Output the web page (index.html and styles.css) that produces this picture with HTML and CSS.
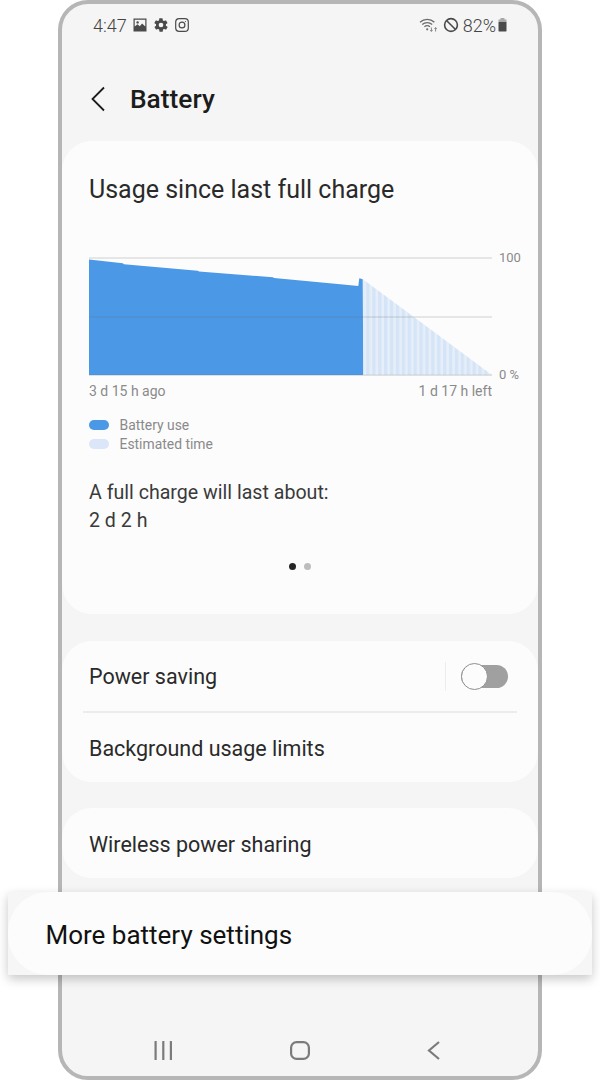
FILE: index.html
```html
<!DOCTYPE html>
<html lang="en">
<head>
    <meta charset="UTF-8">
    <meta name="viewport" content="width=device-width, initial-scale=1.0">
    <title>Battery</title>
    <link rel="stylesheet" href="styles.css">
</head>
<body>
    <div class="phone">
        <div class="status-bar">
            <div class="status-left">
                <span class="status-time">4:47</span>
                <svg class="status-icon" width="14" height="14" viewBox="0 0 14 14">
                    <path fill="#4a4a4a" fill-rule="evenodd" d="M0.500 0.500h13v13h-13z M1.700 1.700v6.900l2.800-2.300 2.200 2 2.400-2.800 3.200 3V1.700z"/>
                    <circle cx="4.600" cy="4.400" r="1.200" fill="#4a4a4a"/>
                </svg>
                <svg class="status-icon" width="14" height="14" viewBox="2 1.500 20 21">
                    <path fill="#4a4a4a" d="M19.400 13a7.800 7.800 0 0 0 0-2l2.100-1.600a.5.5 0 0 0 .1-.6l-2-3.500a.5.5 0 0 0-.6-.2l-2.500 1a7.300 7.300 0 0 0-1.700-1l-.4-2.600a.5.5 0 0 0-.5-.5h-4a.5.5 0 0 0-.5.4l-.4 2.700a7.500 7.500 0 0 0-1.700 1l-2.500-1a.5.5 0 0 0-.6.2l-2 3.500a.5.5 0 0 0 .1.6L4.600 11a7.800 7.800 0 0 0 0 2l-2.100 1.600a.5.5 0 0 0-.1.6l2 3.500c.1.2.4.3.6.2l2.500-1c.5.4 1.100.7 1.700 1l.4 2.600c0 .3.2.5.5.5h4c.3 0 .5-.2.5-.4l.4-2.700a7.500 7.500 0 0 0 1.700-1l2.500 1c.2.1.5 0 .6-.2l2-3.500a.5.5 0 0 0-.1-.6zM12 15.500a3.500 3.500 0 1 1 0-7 3.500 3.500 0 0 1 0 7z"/>
                </svg>
                <svg class="status-icon" width="14" height="14" viewBox="0 0 14 14" fill="none" stroke="#4a4a4a" stroke-width="1.200">
                    <rect x="0.700" y="0.700" width="12.600" height="12.600" rx="3.400"/>
                    <circle cx="7" cy="7" r="2.900"/>
                    <circle cx="10.500" cy="3.500" r=".6" fill="#4a4a4a" stroke="none"/>
                </svg>
            </div>
            <div class="status-right">
                <svg class="wifi" width="20" height="16" viewBox="0 0 20 16" fill="none" stroke="#6b6b6b" stroke-width="1.300">
                    <path d="M1 5.200C5 1.400 11.400 1.400 15.400 5.200"/>
                    <path d="M3.200 7.600c2.900-2.600 7.100-2.600 10 0"/>
                    <path d="M5.400 9.800c1.700-1.400 3.900-1.400 5.600 0"/>
                    <circle cx="8.200" cy="12.300" r="1.100" fill="#6b6b6b" stroke="none"/>
                    <path d="M12.400 10.500v3.800M11.200 13.200l1.200 1.200 1.200-1.200M16.600 14.500v-3.800M15.400 11.800l1.200-1.200 1.200 1.200" stroke-width=".8"/>
                </svg>
                <svg class="no-sound" width="16" height="16" viewBox="0 0 16 16" fill="none" stroke="#4a4a4a" stroke-width="1.600">
                    <circle cx="8" cy="8" r="6.400"/>
                    <path d="M3.500 3.500l9 9"/>
                </svg>
                <span class="status-pct">82%</span>
                <svg width="9" height="14" viewBox="0 0 9 14">
                    <path fill="#a8a8a8" d="M2.500 0h4v1.600h2V4H.5V1.600h2z"/>
                    <path fill="#4a4a4a" d="M.5 4h8v8.800a.6.6 0 0 1-.6.6H1.100a.6.6 0 0 1-.6-.6z"/>
                </svg>
            </div>
        </div>

        <div class="app-header">
            <svg width="16" height="26" viewBox="0 0 16 26" fill="none" stroke="#1c1c1c" stroke-width="1.800">
                <path d="M14 1.500L2.500 13 14 24.500"/>
            </svg>
            <h1>Battery</h1>
        </div>

        <div class="card usage-card">
            <h2>Usage since last full charge</h2>
            <svg class="chart" width="440" height="156" viewBox="0 -8 440 156">
                <defs>
                    <pattern id="stripes" width="5.900" height="10" patternUnits="userSpaceOnUse">
                        <rect width="5.900" height="10" fill="#e6eff9"/>
                        <rect width="3.400" height="10" fill="#d5e4f6"/>
                    </pattern>
                </defs>
                <path fill="#4a98e6" d="M0 1.500L33.700 5.300 35 6.300 108.700 12.700 110 13.500 184 19.300 185 20 251.300 26.300 269.300 28 270.300 20.300 273.700 21.300 274.300 117H0z"/>
                <path fill="url(#stripes)" d="M274.300 21.500L403 117H274.300z"/>
                <g stroke="#707070" stroke-opacity=".2" stroke-width="1.500">
                    <path d="M0 0H403M0 59H403M0 117.200H403"/>
                </g>
                <text class="axis-label" x="410" y="3.500">100</text>
                <text class="axis-label" x="410" y="121">0 %</text>
                <text class="chart-label" x="0" y="137.500">3 d 15 h ago</text>
                <text class="chart-label" x="403" y="137.500" text-anchor="end">1 d 17 h left</text>
            </svg>
            <div class="legend">
                <div class="legend-row"><span class="swatch swatch-use"></span>Battery use</div>
                <div class="legend-row"><span class="swatch swatch-est"></span>Estimated time</div>
            </div>
            <div class="estimate">
                <div>A full charge will last about:</div>
                <div>2 d 2 h</div>
            </div>
            <div class="dots">
                <span class="dot dot-active"></span>
                <span class="dot"></span>
            </div>
        </div>

        <div class="card list-card">
            <div class="list-row power-row">
                <span>Power saving</span>
                <div class="toggle-wrap">
                    <div class="toggle"><span class="knob"></span></div>
                </div>
            </div>
            <div class="divider"></div>
            <div class="list-row">Background usage limits</div>
        </div>

        <div class="card list-card single">
            <div class="list-row">Wireless power sharing</div>
        </div>

        <div class="nav-bar">
            <svg width="20" height="19" viewBox="0 0 20 19" fill="#7b7b7b">
                <rect x="1.500" y="0" width="2.200" height="19" rx=".6"/>
                <rect x="9.200" y="0" width="2.200" height="19" rx=".6"/>
                <rect x="16.800" y="0" width="2.200" height="19" rx=".6"/>
            </svg>
            <svg width="20" height="19" viewBox="0 0 20 19" fill="none" stroke="#7b7b7b" stroke-width="2.200">
                <rect x="1.100" y="1.100" width="17.800" height="16.800" rx="5.500"/>
            </svg>
            <svg width="14" height="19" viewBox="0 0 14 19" fill="none" stroke="#7b7b7b" stroke-width="2.200">
                <path d="M13 1L3 9.500 13 18"/>
            </svg>
        </div>
    </div>

    <div class="highlight">
        <div class="highlight-inner">More battery settings</div>
    </div>
</body>
</html>
```

FILE: styles.css
```css
html, body {
    margin: 0;
    padding: 0;
    background-color: #fff;
}
body {
    position: relative;
    width: 600px;
    height: 1080px;
    overflow: hidden;
    font-family: 'Roboto', 'Liberation Sans', sans-serif;
    color: #2a2a2a;
}
.phone {
    box-sizing: border-box;
    width: 484px;
    height: 1080px;
    margin-left: 58px;
    border: 4px solid #b6b6b6;
    border-radius: 30px;
    background-color: #f5f5f5;
    display: flex;
    flex-direction: column;
    overflow: hidden;
}
.status-bar {
    display: flex;
    justify-content: space-between;
    align-items: center;
    height: 20px;
    margin-top: 11px;
    padding: 0 31px;
    color: #444;
    font-size: 18px;
    font-weight: 300;
}
.status-left, .status-right {
    display: flex;
    align-items: center;
}
.status-left .status-icon {
    margin-left: 7px;
}
.status-time {
    margin-right: -1px;
}
.wifi {
    margin-right: 4px;
    margin-left: 1px;
}
.no-sound {
    margin-right: 4px;
}
.status-pct {
    margin-right: 2px;
}
.app-header {
    display: flex;
    align-items: center;
    height: 36px;
    margin-top: 46px;
    padding-left: 28px;
}
.app-header h1 {
    margin: 0 0 0 24px;
    font-size: 26.300px;
    font-weight: 500;
    color: #1c1c1c;
}
.card {
    background-color: #fcfcfc;
    border-radius: 30px;
}
.usage-card {
    height: 473px;
    margin-top: 24px;
    padding: 34px 0 0 27px;
    box-sizing: border-box;
}
.usage-card h2 {
    margin: 0;
    font-size: 25px;
    line-height: 30px;
    font-weight: 400;
}
.chart {
    display: block;
    margin-top: 45px;
}
.chart-label {
    font-family: 'Roboto', 'Liberation Sans', sans-serif;
    font-size: 14px;
    fill: #8a8a8a;
}
.axis-label {
    font-family: 'Roboto', 'Liberation Sans', sans-serif;
    font-size: 13px;
    fill: #8a8a8a;
}
.legend {
    margin-top: 9px;
    color: #8a8a8a;
    font-size: 13.900px;
}
.legend-row {
    display: flex;
    align-items: center;
    height: 19px;
}
.swatch {
    width: 20px;
    height: 10px;
    border-radius: 5px;
    margin-right: 10.500px;
}
.swatch-use {
    background-color: #4a98e6;
}
.swatch-est {
    background-color: #dbe6f8;
}
.estimate {
    margin-top: 26px;
    font-size: 19.600px;
    line-height: 28px;
    color: #3a3a3a;
}
.dots {
    display: flex;
    justify-content: center;
    gap: 8px;
    margin: 28px 27px 0 0;
}
.dot {
    width: 7px;
    height: 7px;
    border-radius: 50%;
    background-color: #bdbdbd;
}
.dot-active {
    background-color: #252525;
}
.list-card {
    margin-top: 27px;
    height: 141px;
}
.list-card.single {
    margin-top: 26px;
    height: 70px;
}
.list-row {
    display: flex;
    align-items: center;
    box-sizing: border-box;
    height: 70px;
    padding: 0 27px;
    font-size: 21.500px;
}
.single .list-row {
    padding-top: 2px;
}
.power-row {
    justify-content: space-between;
    padding-right: 30px;
}
.toggle-wrap {
    display: flex;
    align-items: center;
    height: 29px;
    padding-left: 15px;
    border-left: 1px solid #eeeeee;
}
.toggle {
    position: relative;
    width: 47px;
    height: 23px;
    border-radius: 12px;
    background-color: #a0a0a0;
}
.knob {
    position: absolute;
    left: 0;
    top: -2px;
    box-sizing: border-box;
    width: 27px;
    height: 27px;
    border-radius: 50%;
    border: 1.500px solid #8e8e8e;
    background-color: #fcfcfc;
}
.divider {
    height: 2px;
    margin: 0 21px;
    background-color: #ececec;
}
.nav-bar {
    display: flex;
    align-items: center;
    gap: 116.500px;
    height: 19px;
    margin-top: auto;
    margin-bottom: 16px;
    padding-left: 91px;
}
.highlight {
    position: absolute;
    left: 8px;
    top: 892px;
    width: 584px;
    height: 83px;
    background-color: #f6f6f6;
    box-shadow: 0 4px 10px rgba(0, 0, 0, 0.22);
}
.highlight-inner {
    display: flex;
    align-items: center;
    box-sizing: border-box;
    height: 83px;
    padding: 3px 0 0 37.500px;
    border-radius: 40px;
    background-color: #fcfcfc;
    font-size: 26px;
    color: #111;
}
```
